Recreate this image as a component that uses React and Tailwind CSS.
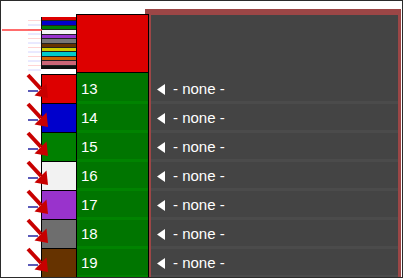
import React from "react";

const stripes = ["#dd0000", "#0000cc", "#008000", "#f4f4f4", "#9933cc", "#777777", "#663300", "#cccc00", "#00cccc", "#cc6600", "#cc6677", "#111111"];

const swatches = [
    { color: "#dd0000", n: 13 },
    { color: "#0000cc", n: 14 },
    { color: "#008000", n: 15 },
    { color: "#f2f2f2", n: 16 },
    { color: "#9933cc", n: 17 },
    { color: "#6e6e6e", n: 18 },
    { color: "#663300", n: 19 },
];

// Annotation layer: faint guide lines, the red marker line and the red arrows
function Annotations() {
    return (
        <svg className="absolute left-0 top-0 z-20 pointer-events-none" width="60" height="278">
            {stripes.map((_, i) => (
                <line key={i} x1="27" x2="40" y1={19.5 + i * 4.5} y2={19.5 + i * 4.5}
                    stroke={i % 2 ? "#d4d4ff" : "#ffd4d4"} strokeWidth="1" />
            ))}
            <line x1="1" x2="41" y1="29" y2="29" stroke="#ff3b3b" strokeWidth="1.5" />
            {swatches.map((_, i) => {
                const t = 75 + i * 29;
                return (
                    <g key={i}>
                        <line x1="27" x2="37" y1={t + 15} y2={t + 15} stroke="#5a5ab8" strokeWidth="2" />
                        <line x1="27" y1={t - 1} x2="40" y2={t + 13} stroke="#c80000" strokeWidth="4" />
                        <polygon points={`47,${t + 22} 33.5,${t + 19.5} 45.5,${t + 7.5}`} fill="#c80000" />
                    </g>
                );
            })}
        </svg>
    );
}

export default function App() {
    return (
        <div className="relative flex w-[403px] h-[278px] overflow-hidden border border-[#2b2b2b] bg-white font-['Liberation_Sans',Arial,sans-serif]">
            <Annotations />

            {/* gutter */}
            <div className="w-[40px] shrink-0" />

            {/* colour swatches */}
            <div className="w-[35px] shrink-0 flex flex-col pt-[16px]">
                <div className="h-[53px] flex flex-col gap-px bg-[#222] border-l border-[#111]">
                    {stripes.map((c, i) => (
                        <div key={i} className="flex-1" style={{ backgroundColor: c }} />
                    ))}
                </div>
                <div className="h-[5px]" />
                {swatches.map((s) => (
                    <div key={s.n} className="h-[29px] shrink-0 border-t border-l border-black" style={{ backgroundColor: s.color }} />
                ))}
            </div>

            {/* numbers column */}
            <div className="relative z-10 w-[73px] shrink-0 flex flex-col pt-[13px]">
                <div className="h-[59px] shrink-0 bg-[#dd0000] border border-black" />
                {swatches.map((s, i) => (
                    <div key={s.n} className={`${i === 0 ? "h-[31px] pt-[2px]" : "h-[29px]"} shrink-0 flex items-center pl-[4px] border-x border-black bg-[linear-gradient(to_bottom,#007500_calc(100%-3px),#008300_calc(100%-3px))] text-[15px] text-white`}>
                        {s.n}
                    </div>
                ))}
            </div>

            {/* assignment panel */}
            <div className="-ml-[4px] mr-px mt-[8px] flex-1 flex flex-col border-t-[6px] border-l-[6px] border-r-[3px] border-b-0 border-[#9c4646] bg-[#444444]">
                <div className="h-[58px] shrink-0" />
                {swatches.map((s, i) => (
                    <div key={s.n} className={`${i === 0 ? "h-[31px] pt-[2px]" : "h-[29px]"} shrink-0 flex items-center pl-[6px] bg-[linear-gradient(to_bottom,#444444_calc(100%-3px),#4b4b4b_calc(100%-3px))] text-[15px] text-white`}>
                        <svg width="8" height="11" viewBox="0 0 8 11">
                            <polygon points="0,5.5 8,0 8,11" fill="#ffffff" />
                        </svg>
                        <span className="ml-[8px]">- none -</span>
                    </div>
                ))}
            </div>
        </div>
    );
}
